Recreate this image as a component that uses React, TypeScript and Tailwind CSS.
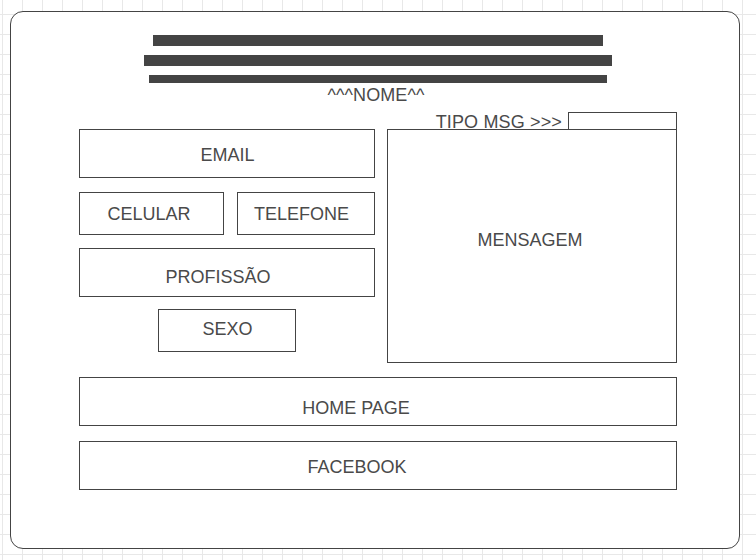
import React from "react";

// Wireframe-style contact form mockup
const box = "border border-[#444444] flex items-center justify-center";

export default function App() {
  return (
    <div
      className="w-[756px] h-[560px] overflow-hidden bg-white bg-[linear-gradient(to_right,#e8e8e8_1px,transparent_1px),linear-gradient(to_bottom,#e8e8e8_1px,transparent_1px)] bg-[size:20px_20px] bg-[position:2px_14px] pt-[11px] pl-[10px] text-[18px] leading-[20px] text-[#4a4a4a]"
      style={{ fontFamily: '"Liberation Sans", Arial, sans-serif' }}
    >
      <div className="w-[730px] h-[538px] bg-white border border-[#444444] rounded-[13px] flex flex-col">
        {/* Header bars */}
        <div className="flex flex-col items-start mt-[23px]">
          <div className="ml-[142px] w-[450px] h-[11px] bg-[#444444]" />
          <div className="ml-[133px] mt-[9px] w-[468px] h-[11px] bg-[#444444]" />
          <div className="ml-[138px] mt-[9px] w-[458px] h-[8px] bg-[#444444]" />
        </div>
        <div className="mt-[2px] text-center pl-[2px] tracking-[0.1px]">^^^NOME^^</div>

        {/* Main fields */}
        <div className="flex gap-[12px] pl-[68px] mt-[7px]">
          <div className="w-[296px] pt-[17px] flex flex-col">
            <div className={`${box} h-[49px] pt-[2px] pl-[1px]`}>EMAIL</div>
            <div className="flex gap-[13px] mt-[14px]">
              <div className={`${box} w-[145px] h-[43px] pr-[5px]`}>CELULAR</div>
              <div className={`${box} w-[138px] h-[43px] pr-[9px]`}>TELEFONE</div>
            </div>
            <div className={`${box} h-[49px] mt-[13px] pt-[9px] pr-[18px]`}>PROFISSÃO</div>
            <div className={`${box} self-center w-[138px] h-[43px] mt-[12px] pb-[3px] pl-[1px]`}>SEXO</div>
          </div>
          <div className="w-[290px] flex flex-col">
            <div className="h-[17px] flex justify-end items-start">
              <span className="leading-[17px] pt-[2px] mr-[6px] whitespace-nowrap tracking-[0.15px]">TIPO MSG &gt;&gt;&gt;</span>
              <div className="w-[109px] h-[17px] border border-b-0 border-[#444444]" />
            </div>
            <div className={`${box} h-[234px] pb-[12px] pr-[4px]`}>MENSAGEM</div>
          </div>
        </div>

        <div className="pl-[68px] flex flex-col">
          <div className={`${box} w-[598px] h-[49px] mt-[14px] pt-[12px] pr-[44px]`}>HOME PAGE</div>
          <div className={`${box} w-[598px] h-[49px] mt-[15px] pt-[3px] pr-[42px]`}>FACEBOOK</div>
        </div>
      </div>
    </div>
  );
}
